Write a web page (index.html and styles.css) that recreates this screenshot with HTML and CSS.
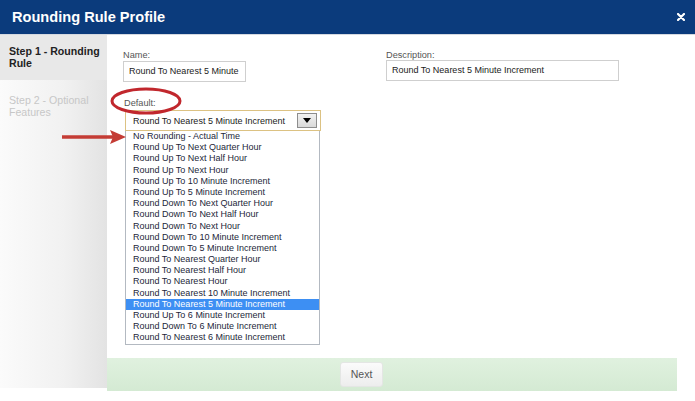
FILE: index.html
```html
<!DOCTYPE html>
<html>
<head>
<meta charset="utf-8">
<link rel="stylesheet" href="styles.css">
</head>
<body>
<div class="modal">
  <header class="titlebar">
    <h1 class="title">Rounding Rule Profile</h1>
    <svg class="close" width="8" height="8" viewBox="0 0 8 8"><path d="M1 1L7 7M7 1L1 7" stroke="#fff" stroke-width="2.2" stroke-linecap="round"/></svg>
  </header>
  <div class="content">
    <nav class="steps">
      <div class="step active">Step 1 - Rounding Rule</div>
      <div class="step">Step 2 - Optional Features</div>
    </nav>
    <main class="main">
      <div class="form">
        <div class="field">
          <label class="label">Name:</label>
          <div class="input name-input">Round To Nearest 5 Minute</div>
        </div>
        <div class="field">
          <label class="label">Description:</label>
          <div class="input desc-input">Round To Nearest 5 Minute Increment</div>
        </div>
        <div class="field default-field">
          <label class="label default-label">Default:</label>
          <div class="select">
            <span class="select-text">Round To Nearest 5 Minute Increment</span>
            <span class="select-btn"><svg width="8" height="5" viewBox="0 0 8 5"><path d="M0 0H8L4 5Z" fill="#000"/></svg></span>
          </div>
          <ul class="options">
            <li>No Rounding - Actual Time</li>
            <li>Round Up To Next Quarter Hour</li>
            <li>Round Up To Next Half Hour</li>
            <li>Round Up To Next Hour</li>
            <li>Round Up To 10 Minute Increment</li>
            <li>Round Up To 5 Minute Increment</li>
            <li>Round Down To Next Quarter Hour</li>
            <li>Round Down To Next Half Hour</li>
            <li>Round Down To Next Hour</li>
            <li>Round Down To 10 Minute Increment</li>
            <li>Round Down To 5 Minute Increment</li>
            <li>Round To Nearest Quarter Hour</li>
            <li>Round To Nearest Half Hour</li>
            <li>Round To Nearest Hour</li>
            <li>Round To Nearest 10 Minute Increment</li>
            <li class="selected">Round To Nearest 5 Minute Increment</li>
            <li>Round Up To 6 Minute Increment</li>
            <li>Round Down To 6 Minute Increment</li>
            <li>Round To Nearest 6 Minute Increment</li>
          </ul>
        </div>
      </div>
      <footer class="footer">
        <button class="next">Next</button>
      </footer>
    </main>
  </div>
</div>
<svg class="ellipse" width="80" height="34" viewBox="0 0 80 34"><ellipse cx="40" cy="17" rx="34" ry="12" fill="none" stroke="#c1272d" stroke-width="3"/></svg>
<svg class="arrow" width="70" height="20" viewBox="0 0 70 20"><path d="M2 10H54" stroke="#c43c35" stroke-width="3.5"/><path d="M50 3L66 10L50 17L53 10Z" fill="#c43c35"/></svg>
</body>
</html>
```
FILE: styles.css
```css
* { box-sizing: border-box; }
html, body { margin: 0; padding: 0; background: #fff; }
body {
  width: 695px;
  height: 401px;
  overflow: hidden;
  position: relative;
  font-family: "Liberation Sans", Arial, sans-serif;
  color: #222;
}
.titlebar {
  height: 35px;
  background: #0b3b7c;
  border-bottom: 1px solid #d5d9e0;
  display: flex;
  align-items: center;
  justify-content: space-between;
  padding: 0 10px 0 12px;
}
.title {
  margin: 0;
  font-size: 14.6px;
  font-weight: bold;
  color: #fff;
  padding-bottom: 1px;
}
.close { margin-right: 0; }
.content {
  display: flex;
  align-items: flex-start;
}
.steps {
  width: 107px;
  height: 353px;
  background: linear-gradient(to right, #fbfbfb, #f1f1f1 60%, #e3e3e3);
  flex-shrink: 0;
}
.step {
  font-size: 10.6px;
  line-height: 12px;
  padding: 14px 6px 0 9px;
  color: #c7c7c7;
}
.step.active {
  height: 45px;
  padding-top: 10px;
  background: #e8e8e8;
  color: #222;
  font-weight: bold;
}
.main {
  width: 570px;
  display: flex;
  flex-direction: column;
}
.form {
  display: grid;
  grid-template-columns: 263px 1fr;
  padding: 14px 0 0 16px;
  row-gap: 15px;
}
.field { display: flex; flex-direction: column; align-items: flex-start; }
.label {
  font-size: 9.2px;
  line-height: 12px;
  color: #555;
}
.input {
  height: 21px;
  border: 1px solid #cfcfcf;
  font-size: 9px;
  line-height: 19px;
  padding-left: 5px;
  color: #222;
  white-space: nowrap;
  overflow: hidden;
}
.name-input { width: 123px; }
.desc-input { width: 233px; margin-top: -1px; }
.default-field { grid-column: 1 / 2; }
.default-label { margin-left: 1px; }
.select {
  margin-top: 1px;
  margin-left: 2px;
  width: 196px;
  height: 21px;
  border: 1px solid #dcc283;
  display: flex;
  align-items: center;
  padding: 0 3px 0 7px;
  font-size: 9px;
  background: #fff;
}
.select-text { flex: 1; white-space: nowrap; }
.select-btn {
  width: 20px;
  height: 15px;
  border: 1px solid #8d8d8d;
  background: linear-gradient(#f2f2f2, #d9d9d9);
  display: flex;
  align-items: center;
  justify-content: center;
}
.options {
  list-style: none;
  margin: 0 0 0 2px;
  padding: 0;
  width: 195px;
  border: 1px solid #b3b9c1;
  border-top: none;
  background: #fff;
}
.options li {
  font-size: 9px;
  line-height: 11.2px;
  height: 11.2px;
  padding-left: 7px;
  white-space: nowrap;
  color: #241f3a;
}
.options li.selected {
  background: #3d8ff3;
  color: #fff;
}
.footer {
  margin-top: 13px;
  height: 33px;
  background: linear-gradient(#e0f1df, #d4ead3);
  display: flex;
  align-items: center;
  padding-left: 233px;
}
.next {
  width: 43px;
  height: 25px;
  font-family: "Liberation Sans", Arial, sans-serif;
  font-size: 10.5px;
  color: #555;
  border: 1px solid #e4e6e4;
  border-radius: 3px;
  background: linear-gradient(#fbfbfb, #ededed);
  padding: 0;
}
.ellipse {
  position: absolute;
  left: 106px;
  top: 84px;
}
.arrow {
  position: absolute;
  left: 60px;
  top: 127px;
}
```
